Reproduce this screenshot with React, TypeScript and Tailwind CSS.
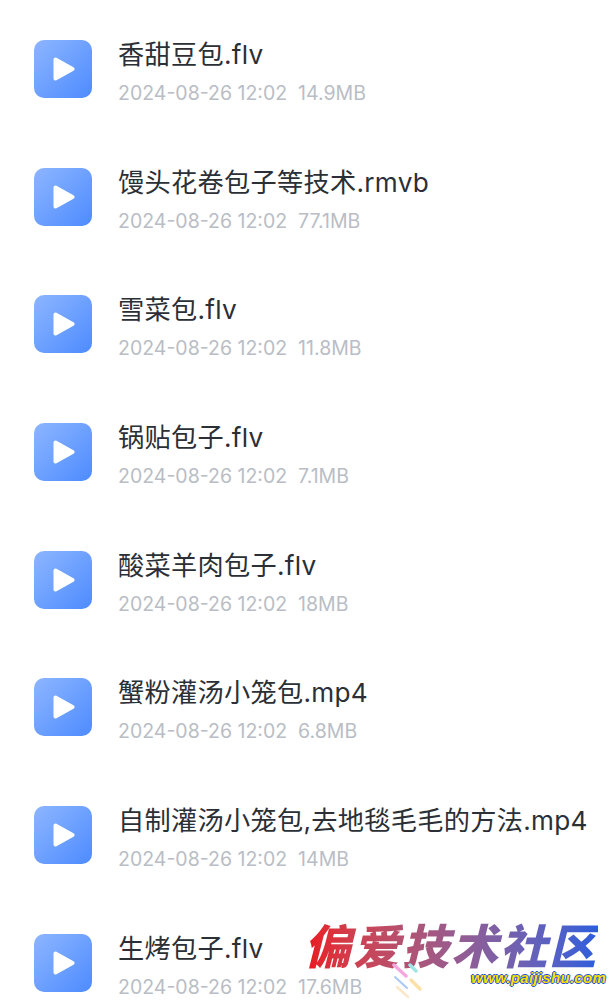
const files = [
  { name: '香甜豆包.flv', size: '14.9MB' },
  { name: '馒头花卷包子等技术.rmvb', size: '77.1MB' },
  { name: '雪菜包.flv', size: '11.8MB' },
  { name: '锅贴包子.flv', size: '7.1MB' },
  { name: '酸菜羊肉包子.flv', size: '18MB' },
  { name: '蟹粉灌汤小笼包.mp4', size: '6.8MB' },
  { name: '自制灌汤小笼包,去地毯毛毛的方法.mp4', size: '14MB' },
  { name: '生烤包子.flv', size: '17.6MB' },
];

const VideoIcon = () => (
  <div className="w-[58px] h-[58px] shrink-0 rounded-[10px] bg-gradient-to-br from-[#8db5ff] to-[#4d8bff] flex items-center justify-center">
    <svg className="ml-[2px]" width="22" height="24" viewBox="0 0 22 24">
      <path d="M2.5 2.5 L19.5 12 L2.5 21.5 Z" fill="#fff" stroke="#fff" strokeWidth="4" strokeLinejoin="round" />
    </svg>
  </div>
);

const Watermark = () => (
  <div className="absolute left-[302px] top-[915px] w-[308px] h-[85px] pointer-events-none">
    <div className="absolute left-[2px] top-[3px] whitespace-nowrap text-[47px] leading-[52px] tracking-[2px] font-black italic bg-gradient-to-r from-[#ea0e18] to-[#2a5ddc] bg-clip-text text-transparent font-['Noto_Sans_CJK_SC',sans-serif]">
      偏爱技术社区
    </div>
    <div className="absolute left-[169px] top-[55px] whitespace-nowrap text-[15px] leading-[16px] tracking-[0.3px] font-bold italic text-[#ffe000] [text-shadow:-1px_0_#1f4fd8,1px_0_#1f4fd8,0_-1px_#1f4fd8,0_1px_#1f4fd8] font-['Liberation_Sans',sans-serif]">
      www.paijishu.com
    </div>
    <svg className="absolute left-[90px] top-[48px]" width="32" height="36" viewBox="0 0 32 36" fill="none" strokeLinecap="round">
      <path d="M2 2 L14 13" stroke="#f5a8e0" strokeWidth="3.5" />
      <path d="M18 2 L24 8" stroke="#9fe6e6" strokeWidth="3.5" />
      <path d="M3 14 L15 25" stroke="#a8c8f5" strokeWidth="2" />
      <path d="M19 17 L28 26" stroke="#fbe0a8" strokeWidth="3.5" />
      <path d="M5 24 L16 34" stroke="#fbe8c8" strokeWidth="2.5" />
    </svg>
  </div>
);

export default function App() {
  return (
    <div className="relative w-[610px] h-[1000px] overflow-hidden bg-white font-['Inter','Noto_Sans_CJK_SC',sans-serif]">
      <div className="flex flex-col pt-[5px] pl-[34px]">
        {files.map((file) => (
          <div key={file.name} className="h-[127.7px] shrink-0 flex items-center gap-[26px]">
            <VideoIcon />
            <div className="flex flex-col pt-[6px]">
              <div className="text-[26.2px] leading-[36px] tracking-[0.3px] text-[#2b2f36] whitespace-nowrap">{file.name}</div>
              <div className="mt-[6px] text-[19.5px] leading-[28px] text-[#b9bdc5] whitespace-pre">
                {`2024-08-26 12:02  ${file.size}`}
              </div>
            </div>
          </div>
        ))}
      </div>
      <Watermark />
    </div>
  );
}
